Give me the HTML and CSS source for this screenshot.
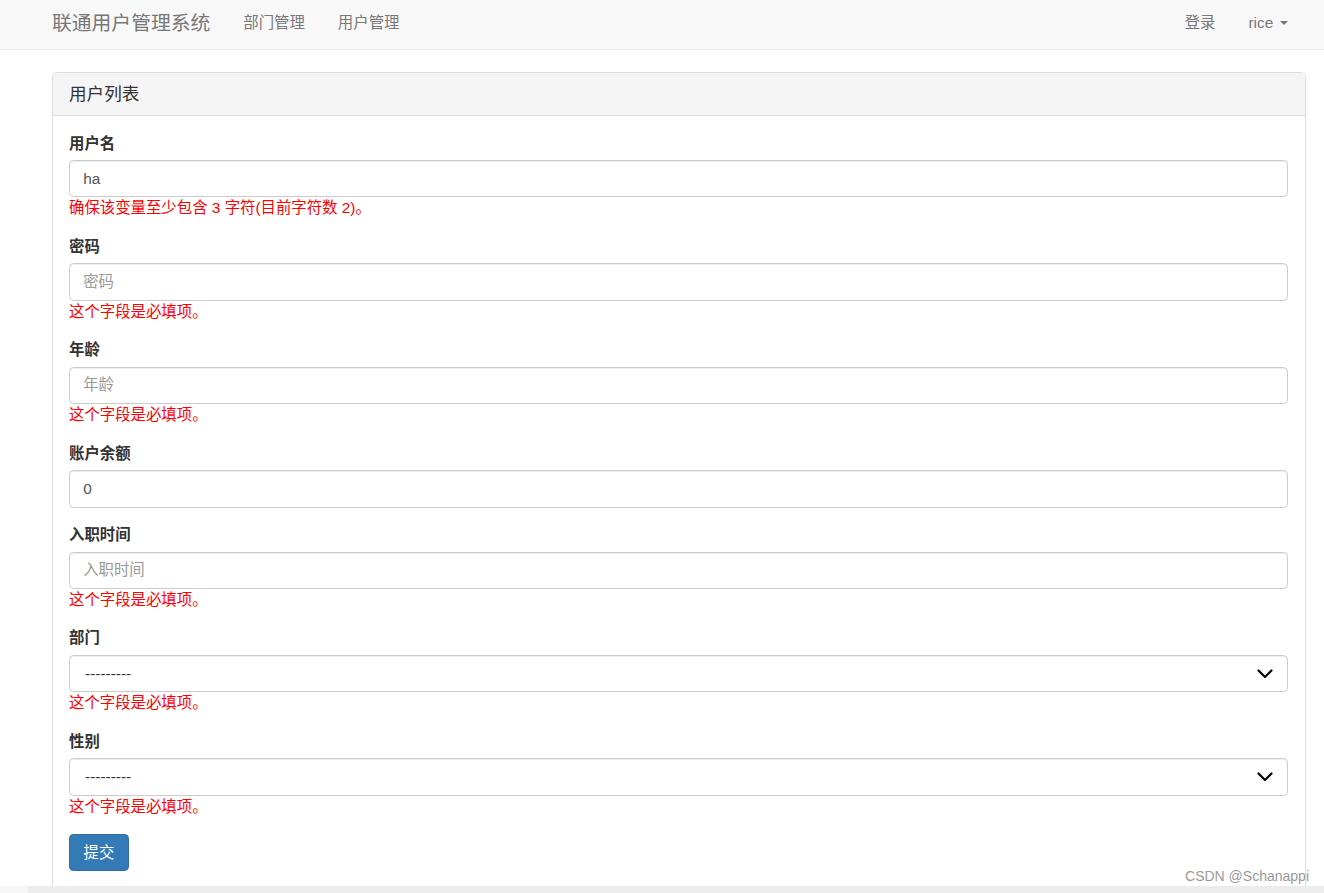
FILE: index.html
```html
<!DOCTYPE html>
<html lang="zh-CN">
<head>
<meta charset="utf-8">
<title>联通用户管理系统</title>
<link rel="stylesheet" href="styles.css">
</head>
<body>
<nav class="navbar">
  <div class="container nav-inner">
    <a class="brand" href="#">联通用户管理系统</a>
    <ul class="nav">
      <li><a href="#">部门管理</a></li>
      <li><a href="#">用户管理</a></li>
    </ul>
    <ul class="nav nav-right">
      <li><a href="#">登录</a></li>
      <li><a href="#">rice <span class="caret"></span></a></li>
    </ul>
  </div>
</nav>
<main class="main">
  <div class="container">
    <div class="panel">
      <div class="panel-heading">用户列表</div>
      <form class="panel-body">
        <div class="form-group">
          <label class="label">用户名</label>
          <input class="form-control" type="text" value="ha">
          <span class="error">确保该变量至少包含 3 字符(目前字符数 2)。</span>
        </div>
        <div class="form-group">
          <label class="label">密码</label>
          <input class="form-control" type="text" placeholder="密码">
          <span class="error">这个字段是必填项。</span>
        </div>
        <div class="form-group">
          <label class="label">年龄</label>
          <input class="form-control" type="text" placeholder="年龄">
          <span class="error">这个字段是必填项。</span>
        </div>
        <div class="form-group">
          <label class="label">账户余额</label>
          <input class="form-control" type="text" value="0">
        </div>
        <div class="form-group">
          <label class="label">入职时间</label>
          <input class="form-control" type="text" placeholder="入职时间">
          <span class="error">这个字段是必填项。</span>
        </div>
        <div class="form-group">
          <label class="label">部门</label>
          <div class="select-wrap">
            <select class="form-control select"><option>---------</option></select>
            <svg class="chevron" width="16" height="10" viewBox="0 0 16 10"><polyline points="1.5,1.5 8,8 14.5,1.5" fill="none" stroke="#000" stroke-width="2.2" stroke-linecap="round" stroke-linejoin="round"/></svg>
          </div>
          <span class="error">这个字段是必填项。</span>
        </div>
        <div class="form-group">
          <label class="label">性别</label>
          <div class="select-wrap">
            <select class="form-control select"><option>---------</option></select>
            <svg class="chevron" width="16" height="10" viewBox="0 0 16 10"><polyline points="1.5,1.5 8,8 14.5,1.5" fill="none" stroke="#000" stroke-width="2.2" stroke-linecap="round" stroke-linejoin="round"/></svg>
          </div>
          <span class="error">这个字段是必填项。</span>
        </div>
        <button class="btn" type="button">提交</button>
      </form>
    </div>
  </div>
</main>
<div class="hscroll"><div class="hscroll-corner"></div><div class="hscroll-track"></div></div>
<div class="watermark">CSDN @Schanappi</div>
</body>
</html>
```

FILE: styles.css
```css
* { box-sizing: border-box; }
html, body { margin: 0; padding: 0; }
body {
  width: 1324px;
  height: 893px;
  overflow: hidden;
  display: flex;
  flex-direction: column;
  position: relative;
  background: #fff;
  font-family: "Liberation Sans", "Noto Sans CJK SC", Arial, sans-serif;
  font-size: 15.4px;
  line-height: 22px;
  color: #333;
}
a { text-decoration: none; }

.container {
  width: 1254px;
  margin-left: 52px;
}

.navbar {
  flex-shrink: 0;
  height: 50px;
  background: #f8f8f8;
  border-bottom: 1px solid #e7e7e7;
}
.nav-inner {
  display: flex;
  align-items: flex-start;
  height: 49px;
}
.brand {
  font-size: 19.8px;
  line-height: 22px;
  color: #777;
  padding: 12px 16.5px 0 0;
}
.nav {
  list-style: none;
  margin: 0;
  padding: 0;
  display: flex;
}
.nav a {
  display: block;
  color: #777;
  font-size: 15.4px;
  line-height: 22px;
  padding: 12px 16.5px 0;
}
.nav-right { margin-left: auto; margin-right: 2px; }
.caret {
  display: inline-block;
  width: 0;
  height: 0;
  margin-left: 2px;
  vertical-align: middle;
  border-top: 4.4px solid #777;
  border-left: 4.4px solid transparent;
  border-right: 4.4px solid transparent;
  position: relative;
  top: -1px;
}

.main {
  flex: 1;
  overflow: hidden;
  padding-top: 22px;
}
.panel {
  border: 1px solid #ddd;
  border-radius: 4.4px;
  background: #fff;
  min-height: 900px;
}
.panel-heading {
  background: #f5f5f5;
  border-bottom: 1px solid #ddd;
  border-radius: 3.4px 3.4px 0 0;
  padding: 12px 16px 11px;
  font-size: 17.6px;
  line-height: 19px;
  color: #333;
}
.panel-body {
  padding: 16.5px 17px 16.5px 16px;
  margin: 0;
}
.form-group { margin-bottom: 16.5px; }
.label {
  display: block;
  font-weight: bold;
  margin-bottom: 5.5px;
  line-height: 22px;
  color: #333;
}
.form-control {
  display: block;
  width: 100%;
  height: 37.4px;
  padding: 6.6px 13.2px;
  font-family: inherit;
  font-size: 15.4px;
  line-height: 22px;
  color: #555;
  background: #fff;
  border: 1px solid #ccc;
  border-radius: 4.4px;
  box-shadow: inset 0 1px 1px rgba(0,0,0,.075);
  margin: 0;
  outline: none;
}
.form-control::placeholder { color: #999; }
.select-wrap { position: relative; }
.select {
  appearance: none;
  -webkit-appearance: none;
  color: #333;
  padding-left: 15px;
}
.chevron {
  position: absolute;
  right: 15px;
  top: 14px;
  pointer-events: none;
}
.error {
  display: block;
  color: #f00;
  line-height: 22px;
}
.btn {
  display: block;
  width: 60px;
  height: 37px;
  padding: 0;
  font-family: inherit;
  font-size: 15.4px;
  line-height: 22px;
  color: #fff;
  background: #337ab7;
  border: 1px solid #2e6da4;
  border-radius: 4.4px;
}

.hscroll {
  flex-shrink: 0;
  height: 7px;
  display: flex;
}
.hscroll-corner { width: 28px; background: #f6f6f6; }
.hscroll-track { flex: 1; background: #ececec; }

.watermark {
  position: absolute;
  right: 15px;
  top: 867px;
  font-size: 14px;
  line-height: 18px;
  color: #999;
}
```
